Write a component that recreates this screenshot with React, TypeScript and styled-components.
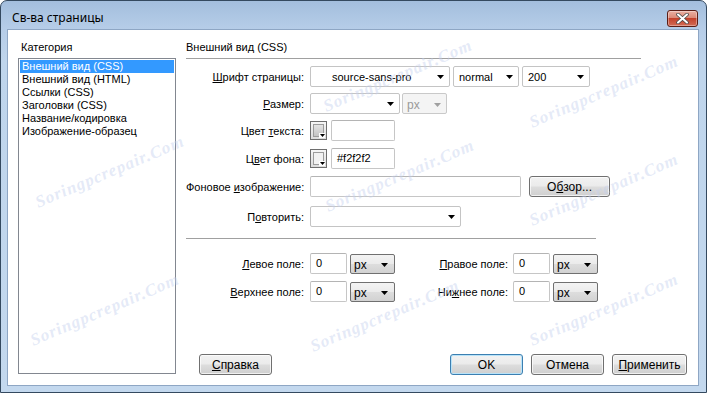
import React from 'react';
import styled, { createGlobalStyle } from 'styled-components';

const GlobalStyle = createGlobalStyle`
  html, body {
    margin: 0;
    padding: 0;
  }
  body {
    width: 707px;
    height: 393px;
    overflow: hidden;
    font-family: "Liberation Sans", Arial, sans-serif;
    font-size: 11px;
    color: #000;
  }
`;

const categories = [
  'Внешний вид (CSS)',
  'Внешний вид (HTML)',
  'Ссылки (CSS)',
  'Заголовки (CSS)',
  'Название/кодировка',
  'Изображение-образец',
];

const watermarks = [
  { x: 390, y: 46 },
  { x: 392, y: 146 },
  { x: 377, y: 286 },
  { x: 102, y: 142 },
  { x: 97, y: 280 },
  { x: 596, y: 62 },
  { x: 596, y: 160 },
  { x: 596, y: 280 },
];

const Arrow = ({ color = '#000' }: { color?: string }) => (
  <svg width="7" height="4" viewBox="0 0 7 4">
    <path d="M0 0h7L3.5 4z" fill={color} />
  </svg>
);

const Combo = ({ value, width, indent = 5 }: { value: string; width: number; indent?: number }) => (
  <ComboBox $width={width}>
    <ComboText $indent={indent}>{value}</ComboText>
    <Arrow />
  </ComboBox>
);

const UnitCombo = () => (
  <UnitBox>
    <UnitText>px</UnitText>
    <Arrow />
  </UnitBox>
);

const ColorPicker = ({ chip }: { chip: string }) => (
  <Swatch>
    <Chip $fill={chip} />
    <SwatchArrow>
      <svg width="5" height="3" viewBox="0 0 5 3">
        <path d="M0 0h5L2.5 3z" fill="#000" />
      </svg>
    </SwatchArrow>
  </Swatch>
);

export default function App() {
  return (
    <>
      <GlobalStyle />
      <Window>
        <TitleBar>
          <Title>Св-ва страницы</Title>
          <CloseButton>
            <svg width="13" height="11" viewBox="0 0 13 11">
              <path
                d="M2 1.5L11 9.5M11 1.5L2 9.5"
                stroke="#4a4a4a"
                strokeWidth="3.6"
                strokeLinecap="round"
              />
              <path
                d="M2 1.5L11 9.5M11 1.5L2 9.5"
                stroke="#fff"
                strokeWidth="2"
                strokeLinecap="round"
              />
            </svg>
          </CloseButton>
        </TitleBar>

        <Client>
          <CategoryPane>
            <PaneLabel>Категория</PaneLabel>
            <CategoryList>
              {categories.map((c, i) => (
                <CategoryItem key={c} $selected={i === 0}>
                  {c}
                </CategoryItem>
              ))}
            </CategoryList>
          </CategoryPane>

          <SettingsPane>
            <SectionTitle>Внешний вид (CSS)</SectionTitle>

            <FieldRow $top={7}>
              <FieldLabel>
                <Key>Ш</Key>рифт страницы:
              </FieldLabel>
              <Combo value="source-sans-pro" width={140} indent={21} />
              <Spacer $w={3} />
              <Combo value="normal" width={66} />
              <Spacer $w={3} />
              <Combo value="200" width={68} />
            </FieldRow>

            <FieldRow $top={6}>
              <FieldLabel>
                <Key>Р</Key>азмер:
              </FieldLabel>
              <Combo value="" width={90} />
              <Spacer $w={2} />
              <DisabledCombo>
                <span>px</span>
                <Arrow color="#a0a0a0" />
              </DisabledCombo>
            </FieldRow>

            <FieldRow $top={6}>
              <FieldLabel>
                Цвет <Key>т</Key>екста:
              </FieldLabel>
              <ColorPicker chip="linear-gradient(#e4e4e4, #c4c4c4)" />
              <Spacer $w={4} />
              <TextInput $width={64} />
            </FieldRow>

            <FieldRow $top={7}>
              <FieldLabel>
                Ц<Key>в</Key>ет фона:
              </FieldLabel>
              <ColorPicker chip="#f2f2f2" />
              <Spacer $w={4} />
              <TextInput $width={64}>#f2f2f2</TextInput>
            </FieldRow>

            <FieldRow $top={7}>
              <FieldLabel>
                Фоновое <Key>и</Key>зображение:
              </FieldLabel>
              <TextInput $width={211} />
              <Spacer $w={8} />
              <PushButton $width={81}>
                О<Key>б</Key>зор...
              </PushButton>
            </FieldRow>

            <FieldRow $top={9}>
              <FieldLabel>
                П<Key>о</Key>вторить:
              </FieldLabel>
              <Combo value="" width={151} />
            </FieldRow>

            <Divider />

            <FieldRow $top={14}>
              <FieldLabel>
                <Key>Л</Key>евое поле:
              </FieldLabel>
              <TextInput $width={37}>0</TextInput>
              <Spacer $w={3} />
              <UnitCombo />
              <SideLabel>
                <Key>П</Key>равое поле:
              </SideLabel>
              <TextInput $width={37}>0</TextInput>
              <Spacer $w={3} />
              <UnitCombo />
            </FieldRow>

            <FieldRow $top={7}>
              <FieldLabel>
                <Key>В</Key>ерхнее поле:
              </FieldLabel>
              <TextInput $width={37}>0</TextInput>
              <Spacer $w={3} />
              <UnitCombo />
              <SideLabel>
                Ни<Key>ж</Key>нее поле:
              </SideLabel>
              <TextInput $width={37}>0</TextInput>
              <Spacer $w={3} />
              <UnitCombo />
            </FieldRow>

            <Footer>
              <PushButton $width={73}>
                <Key>С</Key>правка
              </PushButton>
              <FooterRight>
                <PushButton $width={73} $default>
                  OK
                </PushButton>
                <PushButton $width={73}>Отмена</PushButton>
                <PushButton $width={75}>
                  <Key>П</Key>рименить
                </PushButton>
              </FooterRight>
            </Footer>
          </SettingsPane>

          {watermarks.map((w, i) => (
            <Watermark key={i} style={{ left: w.x, top: w.y }}>
              Soringpcrepair.Com
            </Watermark>
          ))}
        </Client>
      </Window>
    </>
  );
}

const Window = styled.div`
  width: 707px;
  height: 393px;
  box-sizing: border-box;
  border: 1px solid #34495f;
  border-radius: 7px 7px 0 0;
  background: linear-gradient(180deg, #a3bedd 0px, #b6cde8 28px, #bfd5ec 60px, #c3d8ee 100%);
  display: flex;
  flex-direction: column;
  overflow: hidden;
`;

const TitleBar = styled.div`
  height: 28px;
  display: flex;
  align-items: flex-start;
  justify-content: space-between;
  padding: 0 8px 0 11px;
`;

const Title = styled.div`
  font-family: "Noto Sans", "Open Sans", sans-serif;
  font-size: 12px;
  line-height: 16px;
  margin-top: 9px;
  color: #000;
`;

const CloseButton = styled.div`
  width: 31px;
  height: 17px;
  margin-top: 9px;
  box-sizing: border-box;
  border: 1px solid #5b1e16;
  border-radius: 3px;
  background: linear-gradient(180deg, #eab0a3 0%, #dc8a78 45%, #c4422c 50%, #d26b55 100%);
  box-shadow: inset 0 0 0 1px rgba(255, 255, 255, 0.35);
  display: flex;
  align-items: center;
  justify-content: center;
`;

const Client = styled.div`
  position: relative;
  flex: 1;
  margin: 0 7px 6px 6px;
  border: 1px solid #8ea6c4;
  background: #fff;
  display: flex;
  padding: 11px 11px 10px 10px;
  overflow: hidden;
`;

const CategoryPane = styled.div`
  width: 158px;
  display: flex;
  flex-direction: column;
`;

const PaneLabel = styled.div`
  line-height: 13px;
  padding-left: 3px;
  margin-bottom: 4px;
`;

const CategoryList = styled.div`
  flex: 1;
  border: 1px solid #828790;
  padding: 1px;
  margin-bottom: 1px;
`;

const CategoryItem = styled.div<{ $selected?: boolean }>`
  line-height: 13px;
  padding-left: 2px;
  background: ${({ $selected }) => ($selected ? '#3399ff' : 'transparent')};
  color: ${({ $selected }) => ($selected ? '#fff' : '#000')};
  white-space: nowrap;
`;

const SettingsPane = styled.div`
  flex: 1;
  margin-left: 10px;
  display: flex;
  flex-direction: column;
`;

const SectionTitle = styled.div`
  width: 455px;
  line-height: 13px;
  padding-bottom: 4px;
  border-bottom: 1px solid #a0a0a0;
`;

const Divider = styled.div`
  width: 410px;
  margin-top: 11px;
  border-bottom: 1px solid #a0a0a0;
`;

const FieldRow = styled.div<{ $top: number }>`
  display: flex;
  align-items: center;
  height: 21px;
  margin-top: ${({ $top }) => $top}px;
`;

const FieldLabel = styled.div`
  width: 118px;
  margin-right: 6px;
  text-align: right;
  white-space: nowrap;
`;

const SideLabel = styled.div`
  width: 113px;
  margin-right: 5px;
  text-align: right;
  white-space: nowrap;
`;

const Key = styled.span`
  text-decoration: underline;
`;

const Spacer = styled.div<{ $w: number }>`
  width: ${({ $w }) => $w}px;
  flex: none;
`;

const ComboBox = styled.div<{ $width: number }>`
  width: ${({ $width }) => $width}px;
  height: 21px;
  box-sizing: border-box;
  border: 1px solid #c4c4c4;
  border-radius: 2px;
  background: #fff;
  display: flex;
  align-items: center;
  padding-right: 5px;
  flex: none;
`;

const ComboText = styled.span<{ $indent: number }>`
  flex: 1;
  padding-left: ${({ $indent }) => $indent}px;
  white-space: nowrap;
`;

const DisabledCombo = styled.div`
  width: 45px;
  height: 21px;
  box-sizing: border-box;
  border: 1px solid #c9c9c9;
  border-radius: 2px;
  background: #f4f4f4;
  color: #9a9a9a;
  display: flex;
  align-items: center;
  justify-content: space-between;
  padding: 2px 5px 0 4px;
  font-size: 12px;
  flex: none;
`;

const UnitBox = styled.div`
  width: 45px;
  height: 20px;
  box-sizing: border-box;
  border: 1px solid #707070;
  border-radius: 2px;
  background: linear-gradient(180deg, #f3f3f3 0%, #ebebeb 48%, #dddddd 52%, #d2d2d2 100%);
  display: flex;
  align-items: center;
  justify-content: space-between;
  padding: 3px 6px 0 3px;
  flex: none;
`;

const UnitText = styled.span`
  font-size: 12px;
`;

const TextInput = styled.div<{ $width: number }>`
  width: ${({ $width }) => $width}px;
  height: 21px;
  box-sizing: border-box;
  border: 1px solid #c6c6c6;
  border-top-color: #b4b4b4;
  border-radius: 2px;
  background: #fff;
  padding-left: 5px;
  line-height: 19px;
  flex: none;
`;

const Swatch = styled.div`
  position: relative;
  width: 17px;
  height: 19px;
  box-sizing: border-box;
  border: 1px solid #6e6e6e;
  background: linear-gradient(180deg, #f6f6f6, #dcdcdc);
  padding: 2px;
  flex: none;
`;

const Chip = styled.div<{ $fill: string }>`
  width: 11px;
  height: 13px;
  box-sizing: border-box;
  border: 1px solid #9c9c9c;
  background: ${({ $fill }) => $fill};
`;

const SwatchArrow = styled.div`
  position: absolute;
  right: 1px;
  bottom: 1px;
  width: 6px;
  height: 5px;
  background: #fff;
  display: flex;
  align-items: center;
  justify-content: center;
`;

const PushButton = styled.div<{ $width: number; $default?: boolean }>`
  width: ${({ $width }) => $width}px;
  height: 21px;
  box-sizing: border-box;
  border: 1px solid ${({ $default }) => ($default ? '#3c7fb1' : '#707070')};
  border-radius: 3px;
  background: linear-gradient(180deg, #f2f2f2 0%, #ebebeb 48%, #dddddd 52%, #cfcfcf 100%);
  box-shadow: inset 0 0 0 1px ${({ $default }) => ($default ? '#b8e3f9' : 'rgba(255,255,255,0.7)')};
  display: flex;
  align-items: center;
  justify-content: center;
  font-size: 12px;
  flex: none;
`;

const Footer = styled.div`
  margin-top: auto;
  display: flex;
  align-items: center;
  padding-left: 13px;
`;

const FooterRight = styled.div`
  margin-left: auto;
  display: flex;
  gap: 8px;
`;

const Watermark = styled.div`
  position: absolute;
  transform: translate(-50%, -50%) rotate(-23deg);
  font-family: "Liberation Serif", serif;
  font-style: italic;
  font-weight: bold;
  font-size: 17px;
  letter-spacing: 1px;
  white-space: nowrap;
  color: rgba(196, 208, 238, 0.45);
  pointer-events: none;
`;
